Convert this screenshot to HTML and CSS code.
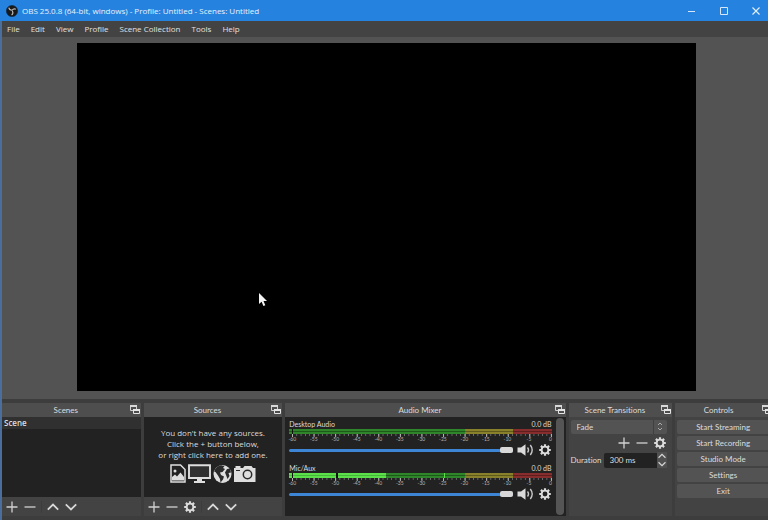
FILE: index.html
```html
<!DOCTYPE html>
<html lang="en">
<head>
  <meta charset="utf-8">
  <title>OBS 25.0.8</title>
  <link rel="stylesheet" href="styles.css">
</head>
<body>
  <!-- shared icons -->
  <svg class="sprite" width="0" height="0" aria-hidden="true">
    <symbol id="float" viewBox="0 0 10 10">
      <path d="M.5.5h6v5h-6z" fill="none" stroke="#cfcfcf"/>
      <path d="M0 0h7v2H0z" fill="#d8d8d8"/>
      <path d="M3.500 4.500h6v4h-6z" fill="#4d4d4d" stroke="#e4e4e4"/>
      <path d="M3 4h7v2H3z" fill="#e4e4e4"/>
    </symbol>
    <symbol id="plus" viewBox="0 0 12 12"><path d="M6 .5v11M.5 6h11" stroke="#d2d2d2" stroke-width="1.3"/></symbol>
    <symbol id="minus" viewBox="0 0 12 12"><path d="M.5 6h11" stroke="#d2d2d2" stroke-width="1.3"/></symbol>
    <symbol id="up" viewBox="0 0 12 12"><path d="M.8 8.6 6 3.6l5.2 5" fill="none" stroke="#d8d8d8" stroke-width="1.8"/></symbol>
    <symbol id="down" viewBox="0 0 12 12"><path d="M.8 3.4 6 8.4l5.2-5" fill="none" stroke="#d8d8d8" stroke-width="1.8"/></symbol>
    <symbol id="gear" viewBox="0 0 12 12">
      <path d="M6 .2v2M6 9.800v2M.2 6h2M9.800 6h2M1.900 1.900l1.500 1.500M8.600 8.600l1.500 1.500M10.100 1.900 8.600 3.400M3.400 8.600l-1.500 1.500" stroke="#dcdcdc" stroke-width="2.200"/>
      <circle cx="6" cy="6" r="3.400" fill="none" stroke="#dcdcdc" stroke-width="1.900"/>
    </symbol>
    <symbol id="speaker" viewBox="0 0 16 12">
      <path d="M0 3.500h3.500L8 .2v11.600L3.500 8.500H0z" fill="#dadada"/>
      <path d="M10 3.500q2 2.500 0 5M12.800 1q3.800 5 0 10" fill="none" stroke="#c8c8c8" stroke-width="1.400"/>
    </symbol>
  </svg>

  <header class="titlebar">
    <svg class="logo" width="12" height="12" viewBox="0 0 12 12">
      <circle cx="6" cy="6" r="5.600" fill="#191919" stroke="#0d2438" stroke-width=".6"/>
      <path d="M2.800 2.600c.3 1.800 1.600 2.600 3.200 2.600M9.800 4.300C8.300 3.500 6.900 4 6.200 5.400M5.600 10c1.400-1 1.600-2.600.7-4" fill="none" stroke="#bdbdbd" stroke-width="1.100"/>
    </svg>
    <span class="caption">OBS 25.0.8 (64-bit, windows) - Profile: Untitled - Scenes: Untitled</span>
    <button class="win-btn" aria-label="Minimize"><svg width="8" height="8"><path d="M0 4.500h7" stroke="#d5e7f8"/></svg></button>
    <button class="win-btn" aria-label="Maximize"><svg width="8" height="8"><path d="M.5.5h7v7h-7z" fill="none" stroke="#d5e7f8"/></svg></button>
    <button class="win-btn" aria-label="Close"><svg width="8" height="8"><path d="M.5.5l7 7M7.500.5l-7 7" stroke="#e5f0fb" stroke-width="1.100"/></svg></button>
  </header>

  <div class="window">
    <nav class="menubar">
      <a href="#">File</a>
      <a href="#">Edit</a>
      <a href="#">View</a>
      <a href="#">Profile</a>
      <a href="#">Scene Collection</a>
      <a href="#">Tools</a>
      <a href="#">Help</a>
    </nav>

    <main class="preview">
      <div class="canvas">
        <svg class="cursor" width="9" height="14" viewBox="0 0 9 14"><path d="M0 0v11l2.600-2.300 1.800 4.300 1.900-.8-1.800-4.200H8z" fill="#f4f4f4"/></svg>
      </div>
    </main>

    <div class="docks">
      <section class="dock">
        <div class="dock-title"><h2>Scenes</h2><button aria-label="Float"><svg width="10" height="10"><use href="#float"/></svg></button></div>
        <ul class="list">
          <li>Scene</li>
        </ul>
        <div class="toolbar">
          <button aria-label="Add"><svg><use href="#plus"/></svg></button>
          <button aria-label="Remove"><svg><use href="#minus"/></svg></button>
          <span class="sep"></span>
          <button aria-label="Move up"><svg><use href="#up"/></svg></button>
          <button aria-label="Move down"><svg><use href="#down"/></svg></button>
        </div>
      </section>

      <section class="dock">
        <div class="dock-title"><h2>Sources</h2><button aria-label="Float"><svg width="10" height="10"><use href="#float"/></svg></button></div>
        <div class="list empty">
          <p>You don't have any sources.<br>Click the + button below,<br>or right click here to add one.</p>
          <div class="kinds">
            <svg width="16" height="20" viewBox="0 0 16 20">
              <path d="M1 1h9.500L15 5.500V18H1z" fill="none" stroke="#dedede" stroke-width="1.500"/>
              <circle cx="5" cy="7" r="1.500" fill="#dedede"/>
              <path d="M2 16.500V13l3-2.500 2 2 3.500-4L14 13v3.500z" fill="#dedede"/>
            </svg>
            <svg width="23" height="20" viewBox="0 0 23 20">
              <path d="M1 1.200h21v12.800H1z" fill="#303030" stroke="#dedede" stroke-width="1.900"/>
              <path d="M9 14.500h5V17h3v2H6v-2h3z" fill="#dedede"/>
            </svg>
            <svg width="19" height="20" viewBox="0 0 19 20">
              <circle cx="9.500" cy="10" r="9" fill="#dedede"/>
              <path d="M8 1.200 11.500 2 10 4l2 1-2.500 3L7 8.500l1 2.500 3 1.500-1 3-2.500 3L7 15l-2-3.500L2.500 8 1 7.500C2 4 5 1.600 8 1.200zM14 5l3-.5 1 4-2.500.5 1 3-2 3-1.500-4-1-2.500z" fill="#2a2a2a"/>
            </svg>
            <svg width="22" height="20" viewBox="0 0 22 20">
              <path d="M0 4h1.500V2h5v2H9l1.500-2h7L19 4h2.500v14H0z" fill="#dedede"/>
              <circle cx="13.500" cy="10.500" r="4.200" fill="#dedede" stroke="#2a2a2a" stroke-width="1.500"/>
              <path d="M2 6.500h4" stroke="#2a2a2a"/>
            </svg>
          </div>
        </div>
        <div class="toolbar">
          <button aria-label="Add"><svg><use href="#plus"/></svg></button>
          <button aria-label="Remove"><svg><use href="#minus"/></svg></button>
          <button aria-label="Properties"><svg><use href="#gear"/></svg></button>
          <span class="sep"></span>
          <button aria-label="Move up"><svg><use href="#up"/></svg></button>
          <button aria-label="Move down"><svg><use href="#down"/></svg></button>
        </div>
      </section>

      <section class="dock">
        <div class="dock-title"><h2>Audio Mixer</h2><button aria-label="Float"><svg width="10" height="10"><use href="#float"/></svg></button></div>
        <div class="mixer">
          <div class="channels">
            <div class="channel">
              <div class="channel-head"><label for="desktop">Desktop Audio</label><span>0.0 dB</span></div>
              <div class="meter"><i class="green"></i><i class="yellow"></i><i class="red"></i><b class="gap"></b></div>
              <div class="ticks"></div>
              <div class="scale"><span>-60</span><span>-55</span><span>-50</span><span>-45</span><span>-40</span><span>-35</span><span>-30</span><span>-25</span><span>-20</span><span>-15</span><span>-10</span><span>-5</span><span>0</span></div>
              <div class="volume">
                <input type="range" id="desktop" value="100">
                <button class="mute" aria-label="Mute"><svg><use href="#speaker"/></svg></button>
                <button aria-label="Settings"><svg><use href="#gear"/></svg></button>
              </div>
            </div>
            <div class="channel">
              <div class="channel-head"><label for="mic">Mic/Aux</label><span>0.0 dB</span></div>
              <div class="meter"><i class="green"></i><i class="yellow"></i><i class="red"></i><b class="level"></b><b class="gap"></b><b class="hold"></b><b class="peak"></b></div>
              <div class="ticks"></div>
              <div class="scale"><span>-60</span><span>-55</span><span>-50</span><span>-45</span><span>-40</span><span>-35</span><span>-30</span><span>-25</span><span>-20</span><span>-15</span><span>-10</span><span>-5</span><span>0</span></div>
              <div class="volume">
                <input type="range" id="mic" value="100">
                <button class="mute" aria-label="Mute"><svg><use href="#speaker"/></svg></button>
                <button aria-label="Settings"><svg><use href="#gear"/></svg></button>
              </div>
            </div>
          </div>
          <div class="scrollbar"></div>
        </div>
      </section>

      <section class="dock">
        <div class="dock-title"><h2>Scene Transitions</h2><button aria-label="Float"><svg width="10" height="10"><use href="#float"/></svg></button></div>
        <div class="transitions">
          <div class="combo">
            <select aria-label="Transition"><option>Fade</option></select>
            <svg width="6" height="9" viewBox="0 0 6 9"><path d="M1 3l2-2 2 2M1 6l2 2 2-2" fill="none" stroke="#aaa"/></svg>
          </div>
          <div class="actions">
            <button aria-label="Add"><svg><use href="#plus"/></svg></button>
            <button aria-label="Remove"><svg><use href="#minus"/></svg></button>
            <button aria-label="Properties"><svg><use href="#gear"/></svg></button>
          </div>
          <div class="duration">
            <label for="duration">Duration</label>
            <input type="text" id="duration" value="300 ms">
            <div class="spin">
              <button aria-label="Increase"><svg><use href="#up"/></svg></button>
              <button aria-label="Decrease"><svg><use href="#down"/></svg></button>
            </div>
          </div>
        </div>
      </section>

      <section class="dock">
        <div class="dock-title"><h2>Controls</h2><button aria-label="Float"><svg width="10" height="10"><use href="#float"/></svg></button></div>
        <div class="controls">
          <button>Start Streaming</button>
          <button>Start Recording</button>
          <button>Studio Mode</button>
          <button>Settings</button>
          <button>Exit</button>
        </div>
      </section>
    </div>
  </div>
</body>
</html>
```
FILE: styles.css
```css
* {
  box-sizing: border-box;
}

body {
  margin: 0;
  min-height: 100vh;
  display: flex;
  flex-direction: column;
  overflow: hidden;
  background: #3f3f3f;
  color: #dcdcdc;
  font-family: "Open Sans", "Noto Sans", sans-serif;
  font-size: 8px;
  line-height: 12px;
}

button,
input,
select {
  margin: 0;
  padding: 0;
  border: none;
  background: none;
  color: inherit;
  font: inherit;
}

svg {
  display: block;
}

.sprite {
  position: absolute;
}

/* title bar */
.titlebar {
  display: flex;
  align-items: center;
  height: 21px;
  margin-right: -4px;
  padding-left: 6px;
  background: #2583df;
  color: #e8f2fc;
}

.caption {
  flex: 1;
  padding-left: 4px;
}

.win-btn {
  display: flex;
  align-items: center;
  justify-content: center;
  width: 32px;
  height: 20px;
}

.window {
  flex: 1;
  display: flex;
  flex-direction: column;
  border-left: 2px solid #4a6f9d;
}

.menubar {
  display: flex;
  gap: 11px;
  height: 16px;
  padding-left: 5px;
  align-items: center;
  background: #434343;
}

.menubar a {
  color: #e0e0e0;
  text-decoration: none;
}

/* preview */
.preview {
  flex: 1;
  padding: 6px 0 7px 3px;
  background: #535353;
}

.canvas {
  position: relative;
  width: 81%;
  aspect-ratio: 16 / 9;
  margin: 0 auto;
  background: #000;
}

.cursor {
  position: absolute;
  left: 29.4%;
  top: 72%;
}

/* docks */
.docks {
  display: grid;
  grid-template-columns: 139fr 139fr 281fr 104fr 98fr;
  gap: 3px;
  margin-right: -5px;
  padding: 4px 0;
  background: #3d3d3d;
  font-family: Lato, "Open Sans", sans-serif;
  font-variant-ligatures: none;
}

.dock {
  display: flex;
  flex-direction: column;
  min-width: 0;
  background: #434343;
}

.dock-title {
  display: flex;
  align-items: center;
  height: 14px;
  padding-right: 1px;
  background: #4e4e4e;
}

.dock-title h2 {
  flex: 1;
  margin: 0;
  font-size: 8px;
  font-weight: normal;
  text-align: center;
  white-space: nowrap;
}

.list {
  flex: 1;
  min-height: 80px;
  margin: 0;
  padding: 0;
  background: #222;
  font-family: "Open Sans", "Noto Sans", sans-serif;
  list-style: none;
}

.list li {
  padding-left: 2px;
  background: #303030;
  font-weight: 600;
}

.toolbar {
  display: flex;
  align-items: center;
  gap: 6px;
  height: 19px;
  padding-left: 4px;
}

.toolbar svg,
.actions svg,
.volume svg {
  width: 12px;
  height: 12px;
}

.sep {
  width: 1px;
  height: 12px;
  margin: 0 -1px;
  background: #3c3c3c;
}

.empty {
  display: flex;
  flex-direction: column;
  align-items: center;
  justify-content: center;
  gap: 4px;
  padding-bottom: 4px;
}

.empty p {
  margin: 0;
  line-height: 11px;
  text-align: center;
  white-space: nowrap;
}

.kinds {
  display: flex;
  gap: 2px;
}

/* audio mixer */
.mixer {
  flex: 1;
  display: flex;
  gap: 4px;
  padding: 1px 2px 1px 4px;
  background: #222;
}

.channels {
  flex: 1;
}

.channel {
  height: 44px;
}

.channel-head {
  display: flex;
  justify-content: space-between;
  padding-top: 2px;
  font-size: 7px;
  line-height: 9px;
}

.meter {
  position: relative;
  display: flex;
  height: 5px;
}

.meter i {
  border: solid;
  border-width: 2px 0;
}

.meter .green {
  flex: 176;
  border-color: #2f852a;
  background: #1d5a1a;
}

.meter .yellow {
  flex: 48;
  border-color: #88802a;
  background: #5f5a1c;
}

.meter .red {
  flex: 39;
  border-color: #872d2d;
  background: #5e1e1e;
}

/* overlays on the meter: current level, markers, peak */
.meter b {
  position: absolute;
  top: 0;
  bottom: 0;
}

.level {
  left: 0;
  width: 37%;
  border: solid #5be04a;
  border-width: 2px 0;
  background: #46b53b;
}

.gap {
  left: 1%;
  width: 1px;
  background: #111;
}

.hold {
  left: 18%;
  width: 2px;
  background: #111;
}

.peak {
  left: 59%;
  width: 1px;
  background: #5be04a;
}

.ticks {
  height: 3px;
  margin: 0 0 0 3px;
  background:
    linear-gradient(90deg, #b5b5b5 1px, transparent 1px) 0 0 / calc((100% - 1px) / 12) 3px,
    linear-gradient(90deg, #707070 1px, transparent 1px) 0 0 / calc((100% - 1px) / 60) 2px repeat-x;
}

.scale {
  display: flex;
  justify-content: space-between;
  margin: 0 1px 0 3px;
  color: #b4b4b4;
  font-size: 5px;
  line-height: 5px;
}

.scale span {
  display: flex;
  justify-content: center;
  width: 0;
}

.volume {
  display: flex;
  align-items: center;
  height: 16px;
}

.volume input {
  flex: 1;
  min-width: 0;
  height: 6px;
  appearance: none;
}

.volume input::-webkit-slider-runnable-track {
  height: 3px;
  border-radius: 2px;
  background: #3d86d6;
}

.volume input::-webkit-slider-thumb {
  width: 13px;
  height: 6px;
  margin-top: -2px;
  border-radius: 2px;
  background: #d8d8d8;
  appearance: none;
}

.volume button {
  margin: 0 1px 0 4px;
}

.volume .mute svg {
  width: 17px;
}

.scrollbar {
  width: 8px;
  border-radius: 4px;
  background: #555;
}

/* scene transitions */
.transitions {
  display: flex;
  flex-direction: column;
  gap: 2px;
  padding: 3px 5px 0 2px;
}

.combo {
  position: relative;
}

.combo select {
  display: block;
  width: 100%;
  height: 14px;
  padding-left: 6px;
  border-radius: 2px;
  background: linear-gradient(#404040, #404040) right 13px top / 1px 100% no-repeat #535353;
  appearance: none;
}

.combo svg {
  position: absolute;
  right: 4px;
  top: 2px;
}

.actions {
  display: flex;
  justify-content: flex-end;
  gap: 6px;
  padding: 1px;
}

.duration {
  display: flex;
  align-items: center;
}

.duration input {
  flex: 1;
  min-width: 0;
  height: 15px;
  margin-left: 2px;
  padding-left: 6px;
  border-radius: 2px 0 0 2px;
  background: #222;
}

.spin button {
  display: block;
  height: 8px;
  padding: 0 1px;
  background: #505050;
}

.spin svg {
  width: 8px;
  height: 8px;
}

/* controls */
.controls {
  display: flex;
  flex-direction: column;
  gap: 2px;
  padding: 3px 4px 0 2px;
}

.controls button {
  height: 14px;
  border-radius: 2px;
  background: #535353;
  line-height: 14px;
}
```
